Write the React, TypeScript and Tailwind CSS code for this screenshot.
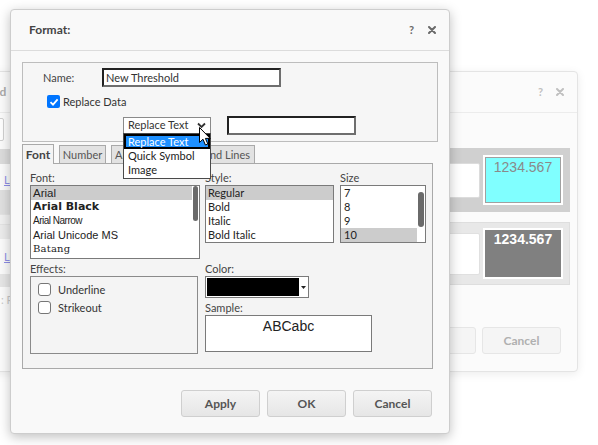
import React from "react";

const fontItems = [
  { label: "Arial", cls: "font-['Liberation_Sans',sans-serif] text-[11.5px]", selected: true },
  { label: "Arial Black", cls: "font-['DejaVu_Sans',sans-serif] font-bold text-[11px]" },
  { label: "Arial Narrow", cls: "font-['Liberation_Sans',sans-serif] tracking-[-0.5px] text-[10px]" },
  { label: "Arial Unicode MS", cls: "font-['Liberation_Sans',sans-serif] text-[11px]" },
  { label: "Batang", cls: "font-['DejaVu_Serif',serif] text-[10px] tracking-[0.2px]" },
];

const styleItems = ["Regular", "Bold", "Italic", "Bold Italic"];
const sizeItems = ["7", "8", "9", "10"];

function XIcon({ className }: { className?: string }) {
  return (
    <svg width="8" height="8" viewBox="0 0 8 8" className={className}>
      <path d="M1 1L7 7M7 1L1 7" stroke="currentColor" strokeWidth="2" strokeLinecap="round" />
    </svg>
  );
}

function Check({ checked }: { checked?: boolean }) {
  if (checked) {
    return (
      <div className="w-[13px] h-[13px] shrink-0 rounded-[2px] bg-[#0075ff] flex items-center justify-center">
        <svg width="10" height="10" viewBox="0 0 10 10">
          <path d="M1.5 5.2L4 7.6L8.6 2.4" stroke="white" strokeWidth="1.8" fill="none" />
        </svg>
      </div>
    );
  }
  return <div className="w-[13px] h-[13px] shrink-0 rounded-[3px] border border-[#767676] bg-white" />;
}

function Button({ label, faded }: { label: string; faded?: boolean }) {
  return (
    <div
      className={`w-[79px] h-[27px] rounded-[3px] border flex items-center justify-center font-bold text-[12px] ${
        faded
          ? "border-[#e6e6e6] bg-[#f5f5f5] text-[#b0b0b0]"
          : "border-[#cfcfcf] bg-gradient-to-b from-[#f4f4f4] to-[#e6e6e6] text-[#555]"
      }`}
    >
      {label}
    </div>
  );
}

function Cursor() {
  return (
    <svg width="13" height="20" viewBox="0 0 13 20" className="absolute left-[199px] top-[127px]">
      <path
        d="M0.5 0.5L0.5 15.5L4 12.2L6.4 18L8.8 17L6.4 11.4L11.2 11.4Z"
        fill="white"
        stroke="black"
        strokeWidth="1"
        strokeLinejoin="round"
      />
    </svg>
  );
}

function BackgroundDialog() {
  return (
    <div className="absolute left-[-60px] top-[71px] w-[638px] h-[301px] rounded-[4px] border border-[#e4e4e4] bg-[#fbfbfb] shadow-[0_2px_10px_rgba(0,0,0,0.08)] flex flex-col">
      <div className="h-[41px] border-b border-[#ececec] flex items-center pl-[12px] pr-[13px] shrink-0">
        <span className="font-bold text-[12px] text-[#aaa]">Threshold</span>
        <div className="ml-auto flex items-center gap-[13px] text-[#c0c0c0]">
          <span className="font-bold text-[11px]">?</span>
          <XIcon />
        </div>
      </div>
      <div className="flex flex-1">
        <div className="w-[300px] pl-[10px] flex flex-col">
          <div className="mt-[5px] h-[23px] w-[53px] border border-[#d0d0d0] rounded-[2px] bg-white" />
          <div className="mt-[8px] h-[15px] bg-[#dcdcdc]" />
          <div className="mt-[9px] pl-[53px] text-[11px] leading-[14px] text-[#8e8ee6] underline">Link</div>
          <div className="mt-[3px] h-[24px] bg-[#e0e0e0]" />
          <div className="h-[11px] bg-[#f1f1f1] border-y border-[#e4e4e4]" />
          <div className="h-[14px] bg-[#ececec]" />
          <div className="mt-[11px] pl-[53px] text-[11px] leading-[14px] text-[#8e8ee6] underline">Link</div>
          <div className="mt-[10px] h-[13px] bg-[#e6e6e6]" />
          <div className="mt-[6px] pl-[50px] text-[11px] leading-[14px] text-[#c8c8c8]">: R</div>
        </div>
        <div className="ml-auto w-[260px] pr-[7px] flex flex-col items-end">
          <div className="mt-[35px] w-[200px] h-[64px] bg-[#d0d0d0] flex items-center justify-end pr-[7px] gap-[3px]">
            <div className="w-[40px] h-[35px] bg-white border border-[#dcdcdc] rounded-[2px]" />
            <div className="w-[80px] h-[50px] bg-white p-[2px]">
              <div className="w-full h-full bg-[#80ffff] border border-[#a0a0a0] flex justify-center text-[14px] leading-[18px] text-[#8a8a8a] font-['Liberation_Sans',sans-serif]">
                1234.567
              </div>
            </div>
          </div>
          <div className="mt-[10px] w-[200px] h-[63px] bg-[#e8e8e8] border border-[#dedede] flex items-center justify-end pr-[6px] gap-[3px]">
            <div className="w-[40px] h-[42px] bg-white border border-[#e0e0e0] rounded-[2px]" />
            <div className="w-[80px] h-[51px] bg-white p-[2px]">
              <div className="w-full h-full bg-[#808080] flex justify-center text-[14px] leading-[18px] text-white font-bold font-['Liberation_Sans',sans-serif]">
                1234.567
              </div>
            </div>
          </div>
          <div className="mt-[42px] flex gap-[6px] pr-[9px]">
            <Button label="OK" faded />
            <Button label="Cancel" faded />
          </div>
        </div>
      </div>
    </div>
  );
}

export default function App() {
  return (
    <div className="relative w-[598px] h-[445px] overflow-hidden bg-white font-['Lato',sans-serif] text-[11px] leading-[14px] text-[#333]">
      <BackgroundDialog />

      {/* Format dialog */}
      <div className="absolute left-[10px] top-[9px] w-[440px] h-[425px] rounded-[4px] border border-[#cdcdcd] bg-[#f9f9f9] shadow-[0_3px_12px_rgba(0,0,0,0.25)] flex flex-col">
        <div className="h-[41px] shrink-0 border-b border-[#dcdcdc] flex items-center pl-[18px] pr-[13px]">
          <span className="font-bold text-[12px] text-[#444]">Format:</span>
          <div className="ml-auto flex items-center gap-[14px] text-[#6a6a6a]">
            <span className="font-bold text-[11px]">?</span>
            <XIcon />
          </div>
        </div>

        <div className="pl-[11px] pt-[11px]">
          {/* group box */}
          <div className="w-[416px] h-[80px] border border-[#bdbdbd] bg-[#f6f6f6]">
            <div className="flex items-center h-[19px] mt-[5px] pl-[20px]">
              <span className="w-[59px] text-[#444]">Name:</span>
              <div className="w-[179px] h-[19px] bg-white border-2 border-t-[#222] border-l-[#222] border-r-[#6e6e6e] border-b-[#6e6e6e] flex items-center pl-[2px] text-[#333]">
                New Threshold
              </div>
            </div>
            <div className="flex items-center h-[13px] mt-[8px] pl-[24px] gap-[3px]">
              <Check checked />
              <span className="text-[#333]">Replace Data</span>
            </div>
            <div className="flex items-center h-[18px] mt-[8px] pl-[100px]">
              <div className="w-[88px] h-[17px] bg-white border border-[#8a8a8a] flex items-center pl-[4px] pr-[4px] text-[#333]">
                <span className="whitespace-nowrap">Replace Text</span>
                <svg width="9" height="7" viewBox="0 0 9 7" className="ml-auto">
                  <path d="M1 1.5L4.5 5L8 1.5" stroke="#333" strokeWidth="1.8" fill="none" />
                </svg>
              </div>
              <div className="ml-[16px] w-[129px] h-[19px] bg-white border-2 border-t-[#222] border-l-[#222] border-r-[#6e6e6e] border-b-[#6e6e6e]" />
            </div>
          </div>

          {/* tabs */}
          <div className="flex items-end mt-[2px] h-[19px] gap-[5px] whitespace-nowrap">
            <div className="w-[32px] h-[20px] -mb-px relative z-10 bg-[#f4f4f4] border border-b-0 border-[#a9a9a9] flex items-center justify-center font-bold text-[12px] text-[#444]">
              Font
            </div>
            <div className="w-[47px] h-[18px] bg-[#e2e2e2] border border-b-0 border-[#a9a9a9] flex items-center justify-center text-[#555]">
              Number
            </div>
            <div className="w-[60px] h-[18px] bg-[#e2e2e2] border border-b-0 border-[#a9a9a9] flex items-center pl-[3px] text-[#555] overflow-hidden">
              Alignment
            </div>
            <div className="w-[79px] h-[18px] bg-[#e2e2e2] border border-b-0 border-[#a9a9a9] flex items-center justify-end pr-[4px] text-[#555] overflow-hidden">
              Grid and Lines
            </div>
          </div>

          {/* tab panel */}
          <div className="w-[411px] h-[206px] border border-[#a9a9a9] bg-[#f4f4f4] pl-[7px] pt-[7px]">
            <div className="flex">
              <div className="w-[170px]">
                <div className="text-[#444]">Font:</div>
                <div className="relative w-[170px] h-[74px] bg-white border border-[#7a7a7a] overflow-hidden text-[#222]">
                  {fontItems.map((f) => (
                    <div
                      key={f.label}
                      className={`h-[14px] leading-[14px] pl-[2px] whitespace-nowrap ${f.cls} ${
                        f.selected ? "bg-[#cccccc] mr-[7px]" : ""
                      }`}
                    >
                      {f.label}
                    </div>
                  ))}
                  <div className="absolute right-[1px] top-[0px] w-[5px] h-[35px] rounded-[3px] bg-[#6a6a6a]" />
                </div>
              </div>
              <div className="ml-[5px] w-[129px]">
                <div className="text-[#444]">Style:</div>
                <div className="w-[129px] h-[58px] bg-white border border-[#7a7a7a] overflow-hidden text-[#222]">
                  {styleItems.map((s, i) => (
                    <div key={s} className={`h-[14px] pl-[2px] ${i === 0 ? "bg-[#cccccc]" : ""}`}>
                      {s}
                    </div>
                  ))}
                </div>
              </div>
              <div className="ml-[6px] w-[86px]">
                <div className="text-[#444]">Size</div>
                <div className="relative w-[86px] h-[58px] bg-white border border-[#7a7a7a] overflow-hidden text-[#222]">
                  {sizeItems.map((s, i) => (
                    <div key={s} className={`h-[14px] pl-[3px] mr-[8px] ${i === 3 ? "bg-[#cccccc]" : ""}`}>
                      {s}
                    </div>
                  ))}
                  <div className="absolute right-[1px] top-[6px] w-[6px] h-[35px] rounded-[3px] bg-[#6a6a6a]" />
                </div>
              </div>
            </div>

            <div className="flex mt-[3px]">
              <div className="w-[168px]">
                <div className="text-[#444]">Effects:</div>
                <div className="w-[168px] h-[78px] border border-[#8a8a8a] pl-[7px] pt-[6px] flex flex-col gap-[5px]">
                  <div className="flex items-center h-[13px] gap-[7px]">
                    <Check />
                    <span>Underline</span>
                  </div>
                  <div className="flex items-center h-[13px] gap-[7px]">
                    <Check />
                    <span>Strikeout</span>
                  </div>
                </div>
              </div>
              <div className="ml-[7px]">
                <div className="text-[#444]">Color:</div>
                <div className="w-[104px] h-[22px] bg-white border border-[#7a7a7a] flex items-center p-[1px]">
                  <div className="w-[92px] h-full bg-black" />
                  <svg width="5" height="3" viewBox="0 0 5 3" className="ml-[2px]">
                    <path d="M0 0H5L2.5 3Z" fill="#222" />
                  </svg>
                </div>
                <div className="mt-[3px] text-[#444]">Sample:</div>
                <div className="w-[167px] h-[37px] bg-white border border-[#7a7a7a] flex justify-center pt-[2px] text-[14px] leading-[16px] text-[#222] font-['Liberation_Sans',sans-serif]">
                  ABCabc
                </div>
              </div>
            </div>
          </div>
        </div>

        <div className="flex justify-end gap-[7px] pr-[17px] mt-[21px]">
          <Button label="Apply" />
          <Button label="OK" />
          <Button label="Cancel" />
        </div>
      </div>

      {/* open dropdown list */}
      <div className="absolute left-[123px] top-[133px] w-[88px] h-[46px] bg-white border border-[#4a4a4a] text-[#222] leading-[14px]">
        <div className="h-[15px] bg-[#1e90ff] text-white pl-[2px] border-2 border-black leading-[11px]">Replace Text</div>
        <div className="h-[14px] pl-[4px]">Quick Symbol</div>
        <div className="h-[14px] pl-[4px]">Image</div>
      </div>
      <Cursor />
    </div>
  );
}
